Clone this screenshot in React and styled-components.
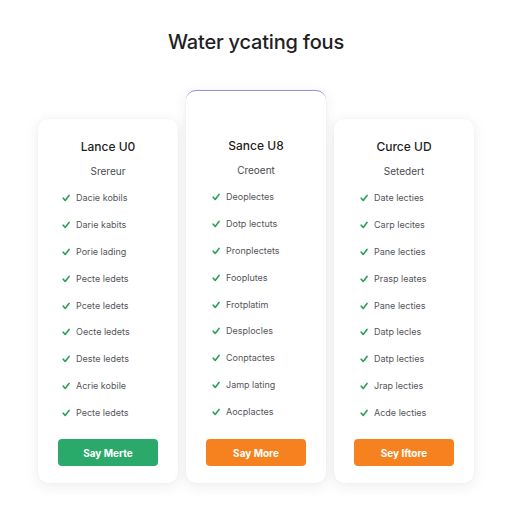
import React from 'react';
import styled, { createGlobalStyle } from 'styled-components';

const GlobalStyle = createGlobalStyle`
  body {
    margin: 0;
    background: #ffffff;
    font-family: Inter, "Noto Sans", sans-serif;
  }
`;

const Page = styled.div`
  width: 512px;
  height: 512px;
  display: flex;
  flex-direction: column;
  align-items: center;
  padding-top: 29px;
  box-sizing: border-box;
`;

const Heading = styled.h1`
  margin: 0;
  font-size: 20px;
  font-weight: 500;
  color: #1f1f24;
  letter-spacing: -0.2px;
  line-height: 26px;
`;

const Plans = styled.div`
  display: flex;
  align-items: flex-end;
  gap: 8px;
  margin-top: 35px;
`;

const Card = styled.div`
  width: 140px;
  height: ${p => (p.$featured ? 393 : 364)}px;
  box-sizing: border-box;
  padding-top: ${p => (p.$featured ? 48 : 20)}px;
  background: #fff;
  border-radius: 10px;
  border-top: 1px solid ${p => (p.$featured ? '#9a90dc' : 'transparent')};
  box-shadow: 0 3px 14px rgba(30, 40, 60, 0.09), 0 0 2px rgba(30, 40, 60, 0.05);
  display: flex;
  flex-direction: column;
  align-items: center;
`;

const PlanName = styled.div`
  font-size: 12px;
  font-weight: 500;
  color: #1f1f24;
  line-height: 14px;
`;

const PlanSub = styled.div`
  margin-top: 11px;
  font-size: 10px;
  color: #4a4a4f;
  line-height: 12px;
`;

const Features = styled.ul`
  list-style: none;
  margin: 15px 0 0;
  padding: 0 0 0 ${p => p.$indent}px;
  align-self: stretch;
  display: flex;
  flex-direction: column;
  gap: 14.9px;
`;

const Feature = styled.li`
  display: flex;
  align-items: center;
  gap: 6px;
  font-size: 9px;
  line-height: 12px;
  color: #55555b;
`;

const Check = styled.svg`
  width: 8px;
  height: 8px;
  flex: none;
`;

const Button = styled.button`
  margin-top: auto;
  margin-bottom: 17px;
  width: 100px;
  height: 27px;
  border: none;
  border-radius: 4px;
  background: ${p => p.$color};
  color: #fff;
  font-family: Inter, "Noto Sans", sans-serif;
  font-size: 10px;
  font-weight: 700;
`;

const plans = [
  {
    name: 'Lance U0',
    sub: 'Srereur',
    indent: 24,
    color: '#2aa96a',
    button: 'Say Merte',
    items: ['Dacie kobils', 'Darie kabits', 'Porie lading', 'Pecte ledets', 'Pcete ledets', 'Oecte ledets', 'Deste ledets', 'Acrie kobile', 'Pecte ledets'],
  },
  {
    name: 'Sance U8',
    sub: 'Creoent',
    indent: 26,
    featured: true,
    color: '#f5821f',
    button: 'Say More',
    items: ['Deoplectes', 'Dotp lectuts', 'Pronplectets', 'Fooplutes', 'Frotplatim', 'Desplocles', 'Conptactes', 'Jamp lating', 'Aocplactes'],
  },
  {
    name: 'Curce UD',
    sub: 'Setedert',
    indent: 26,
    color: '#f5821f',
    button: 'Sey Iftore',
    items: ['Date lecties', 'Carp lecites', 'Pane lecties', 'Prasp leates', 'Pane lecties', 'Datp lecles', 'Datp lecties', 'Jrap lecties', 'Acde lecties'],
  },
];

const CheckIcon = () => (
  <Check viewBox="0 0 10 10">
    <path d="M1.5 5.2 L4 8 L8.8 1.8" fill="none" stroke="#2f9e55" strokeWidth="2" strokeLinecap="round" strokeLinejoin="round" />
  </Check>
);

export default function App() {
  return (
    <Page>
      <GlobalStyle />
      <Heading>Water ycating fous</Heading>
      <Plans>
        {plans.map(plan => (
          <Card key={plan.name} $featured={plan.featured}>
            <PlanName>{plan.name}</PlanName>
            <PlanSub>{plan.sub}</PlanSub>
            <Features $indent={plan.indent}>
              {plan.items.map((item, i) => (
                <Feature key={i}>
                  <CheckIcon />
                  {item}
                </Feature>
              ))}
            </Features>
            <Button $color={plan.color}>{plan.button}</Button>
          </Card>
        ))}
      </Plans>
    </Page>
  );
}
